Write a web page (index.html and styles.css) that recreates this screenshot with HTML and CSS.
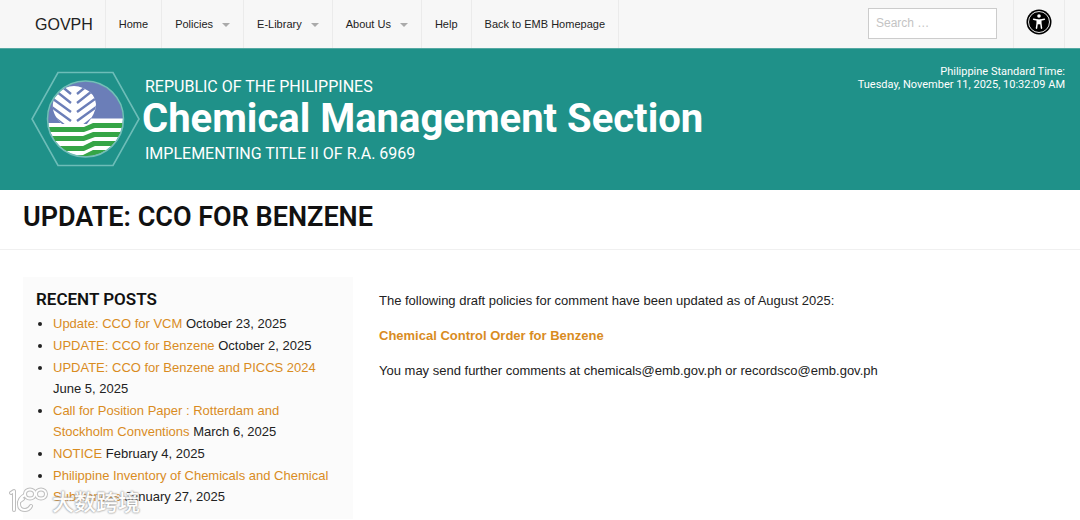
FILE: index.html
```html
<!DOCTYPE html>
<html lang="en">
<head>
<meta charset="utf-8">
<meta name="viewport" content="width=device-width, initial-scale=1">
<title>UPDATE: CCO for Benzene</title>
<link rel="stylesheet" href="styles.css">
</head>
<body>
<nav class="topbar">
  <a class="brand" href="#">GOVPH</a>
  <ul class="menu">
    <li><a href="#">Home</a></li>
    <li><a class="has-menu" href="#">Policies</a></li>
    <li><a class="has-menu" href="#">E-Library</a></li>
    <li><a class="has-menu" href="#">About Us</a></li>
    <li><a href="#">Help</a></li>
    <li><a href="#">Back to EMB Homepage</a></li>
  </ul>
  <form class="search"><input type="search" placeholder="Search …" aria-label="Search"></form>
  <button class="access" type="button" aria-label="Accessibility">
    <svg viewBox="0 0 26 26" width="26" height="26" aria-hidden="true">
      <circle cx="13" cy="13" r="12.5"/>
      <circle cx="13" cy="13" r="10.5" fill="none" stroke="#fff" stroke-width="0.9"/>
      <circle cx="13" cy="7" r="1.8" fill="#fff"/>
      <path d="M7.600 10.200 11.200 10.900V14L10.500 19.200M18.400 10.200 14.800 10.900V14L15.500 19.200" fill="none" stroke="#fff" stroke-width="1.500" stroke-linecap="round" stroke-linejoin="round"/>
      <path d="M11 10.300h4v5h-4z" fill="#fff"/>
    </svg>
  </button>
</nav>
<header class="banner">
  <svg class="seal" viewBox="0 0 110 98" width="110" height="98" aria-hidden="true">
    <defs>
      <clipPath id="disc"><circle cx="55.5" cy="49" r="37.5"/></clipPath>
      <clipPath id="crown"><path d="M32 54C25 47 22 41 23 33Q25 22 35 18Q44 14 53 18Q65 23 66 34Q66 43 57 54Z"/></clipPath>
    </defs>
    <path d="M28 2.500H83L109 49 83 95.500H28L2 49Z" fill="none" stroke="#6dbdb8" stroke-width="1.600"/>
    <g clip-path="url(#disc)">
      <path d="M0 0h110v98H0z" fill="#6b7eb8"/>
      <path d="M0 53H52L60 48.500H110V98H0Z" fill="#fff"/>
      <path d="M0 57H54L63 53H110V58H65L54 62H0ZM0 66H53L63 62H110V67H65L54 71H0ZM0 76H53L63 71H110V76H65L54 81H0ZM0 85H53L63 80H110V85H65L54 90H0Z" fill="#35a546"/>
      <g clip-path="url(#crown)">
        <path d="M15 5h55v50H15z" fill="#fff"/>
        <path d="M30 15 41 24M58 15 47 24M22 18 41 33M66 18 47 33M19 26 41 42M69 26 47 42M19 35 41 51M69 35 47 51M20 44 34 55M68 44 54 55" fill="none" stroke="#6b7eb8" stroke-width="2.400"/>
      </g>
    </g>
    <circle cx="55.500" cy="49" r="38" fill="none" stroke="#75beb8" stroke-width="1.500"/>
  </svg>
  <div class="titles">
    <p class="line">REPUBLIC OF THE PHILIPPINES</p>
    <p class="site">Chemical Management Section</p>
    <p class="line">IMPLEMENTING TITLE II OF R.A. 6969</p>
  </div>
  <div class="clock">Philippine Standard Time:<br>Tuesday, November 11, 2025, 10:32:09 AM</div>
</header>
<div class="heading"><h1>UPDATE: CCO FOR BENZENE</h1></div>
<div class="content">
  <aside class="recent">
    <h2>RECENT POSTS</h2>
    <ul>
      <li><a href="#">Update: CCO for VCM</a> October 23, 2025</li>
      <li><a href="#">UPDATE: CCO for Benzene</a> October 2, 2025</li>
      <li><a href="#">UPDATE: CCO for Benzene and PICCS 2024</a> June 5, 2025</li>
      <li><a href="#">Call for Position Paper : Rotterdam and Stockholm Conventions</a> March 6, 2025</li>
      <li><a href="#">NOTICE</a> February 4, 2025</li>
      <li><a href="#">Philippine Inventory of Chemicals and Chemical Substances</a> January 27, 2025</li>
    </ul>
  </aside>
  <main class="article">
    <p>The following draft policies for comment have been updated as of August 2025:</p>
    <p><a href="#"><strong>Chemical Control Order for Benzene</strong></a></p>
    <p>You may send further comments at chemicals@emb.gov.ph or recordsco@emb.gov.ph</p>
  </main>
</div>
<div class="watermark">
  <svg viewBox="0 0 40 28" width="40" height="28" aria-hidden="true">
    <g fill="none" stroke-linecap="round" stroke-linejoin="round">
      <path class="edge" d="M3 7 6 5V24M17 9Q11 12 11 18T17 24Q21 24 23 20M11 16 15 13"/>
      <ellipse class="edge" cx="22" cy="8" rx="5" ry="4.500"/><ellipse class="edge" cx="33" cy="8" rx="5" ry="4.500"/>
      <path class="core" d="M3 7 6 5V24M17 9Q11 12 11 18T17 24Q21 24 23 20M11 16 15 13"/>
      <ellipse class="core" cx="22" cy="8" rx="5" ry="4.500"/><ellipse class="core" cx="33" cy="8" rx="5" ry="4.500"/>
    </g>
  </svg>
  <span>大数跨境</span>
</div>
</body>
</html>
```
FILE: styles.css
```css
* { box-sizing: border-box; }
body {
  margin: 0;
  background: #fff;
  color: #222;
  font: 13px/21px "Liberation Sans", Arial, sans-serif;
  position: relative;
}
a { color: #d98c1f; text-decoration: none; }
p, h1, h2 { margin: 0; }

.topbar {
  display: flex;
  align-items: stretch;
  height: 48px;
  padding: 0 15px 0 23px;
  background: #f7f7f7;
}
.topbar a { color: #222; display: flex; align-items: center; padding: 0 13px; }
.topbar .brand { font-size: 16px; padding: 0 12px; border-right: 1px solid #ebebeb; }
.menu { display: flex; margin: 0; padding: 0; list-style: none; font-size: 11px; }
.menu li { display: flex; border-right: 1px solid #ebebeb; }
.has-menu::after {
  content: "";
  margin: 2px 0 0 9px;
  border: 4px solid transparent;
  border-top-color: #aaa;
  border-bottom: 0;
}
.search { display: flex; align-items: center; margin: 0 16px 2px auto; }
.search input {
  width: 129px;
  height: 31px;
  padding: 0 7px;
  border: 1px solid #ccc;
  border-radius: 0;
  background: #fff;
  font: 12px "Liberation Sans", Arial, sans-serif;
}
.search input::placeholder { color: #c4c4c4; }
.access {
  width: 52px;
  padding: 0 0 4px;
  border: solid #ebebeb;
  border-width: 0 1px;
  background: none;
  display: flex;
  align-items: center;
  justify-content: center;
}

.banner {
  display: flex;
  align-items: flex-start;
  padding: 21px 15px 21px 30px;
  min-height: 142px;
  background: #1f9189;
  border-top: 1px solid #55a9a3;
  color: #fff;
  font-family: Roboto, sans-serif;
}
.seal { flex: none; }
.titles { padding: 7px 0 0 2px; }
.line { padding-left: 3px; font-size: 16px; line-height: 20px; }
.site { font-size: 40px; font-weight: 700; line-height: 44px; padding-bottom: 3px; }
.clock {
  margin: -5px 0 0 auto;
  text-align: right;
  font-size: 11px;
  line-height: 13px;
}

.heading { padding: 11px 23px 16px; border-bottom: 1px solid #f0f0f0; }
h1 { font: 600 27px/32px Roboto, sans-serif; color: #111; }

.content { display: flex; gap: 26px; padding: 27px 23px 0; }
.recent { flex: 0 0 330px; padding: 11px 13px 12px; background: #fbfbfb; }
h2 { font: 600 17px/22px Roboto, sans-serif; color: #111; }
.recent ul { margin: 3px 0 0; padding: 0 0 0 17px; }
.recent li + li { margin-top: 1px; }
.article { flex: 1; padding-top: 13px; }
.article p { margin-bottom: 14px; }

.watermark {
  position: absolute;
  left: 8px;
  bottom: 5px;
  display: flex;
  align-items: center;
  gap: 4px;
  color: #fff;
  font: 500 22px/28px "Noto Sans CJK SC", sans-serif;
  text-shadow: 0 0 2px #888, 0 0 2px #999;
  opacity: .9;
}
.edge { stroke: #b8b8b8; stroke-width: 4; }
.core { stroke: #fff; stroke-width: 2; }
```
